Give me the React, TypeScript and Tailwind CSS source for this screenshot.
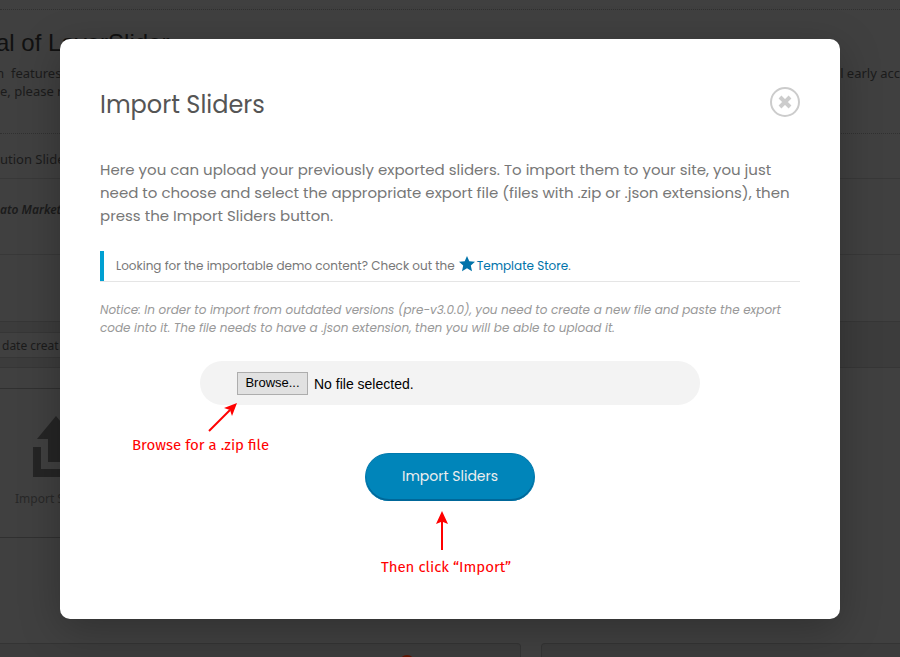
import { useState } from "react";

function UploadIcon() {
  return (
    <svg viewBox="0 0 48 62" className="ml-8 block h-[62px] w-12 fill-[#252525]" aria-hidden="true">
      <path d="M24 0L5 23H16V46H32V23H43Z" />
      <path d="M1 31H9V53H39V31H47V61H1Z" />
    </svg>
  );
}

function Backdrop() {
  return (
    <div
      aria-hidden="true"
      className="h-screen overflow-hidden bg-[#404040] pt-[9px] font-['Noto_Sans','Open_Sans',sans-serif] text-[13px] leading-[18px] whitespace-nowrap text-[#1b1b1b]"
    >
      <header className="h-[125px] border-y border-dotted border-[#303030] pt-[19px]">
        <h1 className="-ml-1 font-['Liberation_Sans',Arial,sans-serif] text-[24px] leading-7 text-[#111]">al of LayerSlider</h1>
        <div className="-ml-2 flex justify-between pt-[7px]">
          <span>m&nbsp; features</span>
          <span>l early acc</span>
        </div>
        <p>e, please r</p>
      </header>
      <p className="h-[45px] border-b border-[#383838] pt-4">ution Slider</p>
      <p className="h-[76px] border-b border-[#383838] pt-[22px] text-[12px] font-semibold italic">ato Market</p>
      <div className="h-[67px] border-b border-[#363636]" />
      <div className="h-[46px] border-b border-[#363636] bg-[#3c3c3c] pt-2.5">
        <p className="h-[26px] w-40 border-y border-[#363636] bg-[#404040] pt-1 pl-0.5 text-[12px]">date creat</p>
      </div>
      <section className="mt-5 h-[150px] w-40 border-y border-[#303030] pt-[27px]">
        <UploadIcon />
        <p className="pt-3 pl-[15px] text-[12px] text-[#282828]">Import S</p>
      </section>
      <footer className="mt-[105px] flex h-10 gap-5">
        <div className="w-[521px] overflow-hidden rounded-tr-sm border-t border-r border-[#343434] bg-[#3c3c3c]">
          <div className="mt-[11px] ml-[399px] size-4 rounded-full bg-[#601400]" />
        </div>
        <div className="flex-1 rounded-tl-sm border-t border-l border-[#343434] bg-[#3c3c3c]" />
      </footer>
    </div>
  );
}

export default function App() {
  const [fileName, setFileName] = useState("No file selected.");

  return (
    <div className="relative overflow-hidden">
      <Backdrop />
      <div className="absolute inset-0 flex items-start justify-center px-[60px] pt-[39px]">
        <main
          role="dialog"
          aria-labelledby="dialog-title"
          className="w-full max-w-[780px] rounded-[10px] bg-white px-10 pt-12 pb-[42px] font-[Poppins,Inter,sans-serif] text-[#777] shadow-[0_10px_40px_rgba(0,0,0,0.25)]"
        >
          <div className="flex h-[30px] items-center justify-between">
            <h2 id="dialog-title" className="pt-1.5 text-[24px] leading-9 text-[#555]">Import Sliders</h2>
            <button type="button" aria-label="Close" className="flex size-[30px] items-center justify-center rounded-full border-2 border-[#ccc]">
              <svg viewBox="0 0 14 14" className="size-3.5 stroke-[#ccc] stroke-[4]" aria-hidden="true">
                <path d="M2 2L12 12M12 2L2 12" />
              </svg>
            </button>
          </div>

          <p className="mt-[41px] text-[15px] leading-[23px]">
            Here you can upload your previously exported sliders. To import them to your site, you just need to choose and select the
            appropriate export file (files with .zip or .json extensions), then press the Import Sliders button.
          </p>

          <div className="mt-6 border-b border-[#e5e5e5]">
            <p className="flex h-[30px] items-center border-l-4 border-[#00a0d2] pl-3 text-[12px]">
              Looking for the importable demo content? Check out the
              <a href="#templates" className="ml-1 flex items-center gap-0.5 text-[#0073aa]">
                <svg viewBox="0 0 16 20" className="h-5 w-4 fill-current" aria-hidden="true">
                  <path d="M8 0L10.3 5.2L16 5.8L11.8 9.6L13 15.2L8 12.3L3 15.2L4.2 9.6L0 5.8L5.7 5.2Z" />
                </svg>
                Template Store
              </a>
              .
            </p>
          </div>

          <p className="mt-[19px] text-[12px] leading-[18px] text-[#999] italic">
            Notice: In order to import from outdated versions (pre-v3.0.0), you need to create a new file and paste the export code
            into it. The file needs to have a .json extension, then you will be able to upload it.
          </p>

          <div className="relative mx-auto mt-6 flex h-11 max-w-[500px] items-center gap-1.5 rounded-full bg-[#f3f3f3] pl-[37px] font-['Liberation_Sans',Arial,sans-serif] text-black">
            <input
              id="import-file"
              type="file"
              accept=".zip,.json"
              className="sr-only"
              onChange={(e) => setFileName(e.target.files?.[0]?.name ?? "No file selected.")}
            />
            <label htmlFor="import-file" className="flex h-[23px] w-[71px] items-center justify-center border border-[#adadad] bg-[#e1e1e1] text-[13px]">
              Browse...
            </label>
            <output className="pt-0.5 text-[14px]">{fileName}</output>
            <div className="absolute top-[42px] -left-[68px] font-['Fira_Sans','Noto_Sans','Open_Sans',sans-serif] text-[15px] leading-5 text-[#f00]">
              <svg viewBox="0 0 30 30" className="ml-[76px] block size-[30px] fill-[#f00] stroke-[#f00]" aria-hidden="true">
                <path d="M1 28L22 7" fill="none" strokeWidth="2" />
                <path d="M29 0L24 13L22 7L16 5Z" stroke="none" />
              </svg>
              <p className="mt-0.5 whitespace-nowrap">Browse for a .zip file</p>
            </div>
          </div>

          <div className="mt-12 text-center">
            <button
              type="button"
              className="h-12 w-[170px] rounded-full border border-b-0 border-[#0079ad] bg-[#0085ba] pb-0.5 text-[14px] text-[#eee] shadow-[inset_0_-2px_0_#006799]"
            >
              Import Sliders
            </button>
          </div>
          <div className="mt-2.5 flex flex-col items-center pr-2 font-['Fira_Sans','Noto_Sans','Open_Sans',sans-serif] text-[15px] leading-5 text-[#f00]">
            <svg viewBox="0 0 14 40" className="mr-2 block h-10 w-3.5 fill-[#f00]" aria-hidden="true">
              <path d="M7 0L13 13L8 11V39H6V11L1 13Z" />
            </svg>
            <p className="mt-1.5">Then click “Import”</p>
          </div>
        </main>
      </div>
    </div>
  );
}
